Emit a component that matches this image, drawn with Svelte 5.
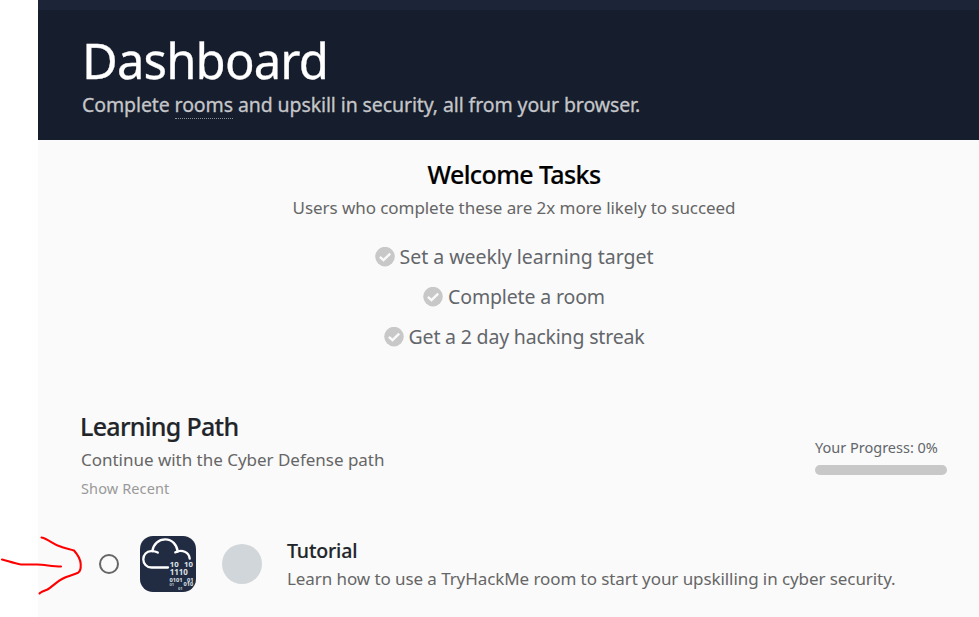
<script>
  const tasks = [
    { label: 'Set a weekly learning target', tracking: -0.03 },
    { label: 'Complete a room', tracking: -0.14 },
    { label: 'Get a 2 day hacking streak', tracking: -0.19 }
  ];
</script>

<div class="page">
  <header>
    <h1>Dashboard</h1>
    <p>Complete <span class="term">rooms</span> and upskill in security, all from your browser.</p>
  </header>

  <main>
    <section class="welcome">
      <h2>Welcome Tasks</h2>
      <p>Users who complete these are 2x more likely to succeed</p>
      <ul>
        {#each tasks as task}
          <li>
            <svg width="20" height="20" viewBox="0 0 20 20">
              <circle cx="10" cy="9.6" r="9.8" fill="#c8c8c8" />
              <path d="M4.9 9.8 8.5 13.2 15.200 6.600" fill="none" stroke="#fafafa" stroke-width="2.4" />
            </svg>
            <span style="letter-spacing: {task.tracking}px">{task.label}</span>
          </li>
        {/each}
      </ul>
    </section>

    <section class="path">
      <div>
        <h2>Learning Path</h2>
        <p>Continue with the Cyber Defense path</p>
        <a class="recent">Show Recent</a>
      </div>
      <div class="progress">
        <span>Your Progress: 0%</span>
        <div class="bar"></div>
      </div>
    </section>

    <article>
      <span class="ring"></span>
      <svg class="tile" width="56" height="56" viewBox="0 0 56 56">
        <rect width="56" height="56" rx="13" fill="#212c42" />
        <g fill="none" stroke="#fff" stroke-width="2.3" stroke-linecap="round">
          <path d="M28 31.5H11.5C6.5 31.5 3.3 27.5 3.3 23.2C3.3 18.5 6.700 15.300 11 15.100C13.700 15 16 15.500 17.800 16.600" />
          <path d="M12.3 15C13.5 8 18.5 3.4 25.3 3.4C32 3.4 36.9 8.6 37.7 15.6" />
          <path d="M35.3 16.4C42 13 49 16 49.7 22.6" />
        </g>
        <g class="bits" fill="#dfe2e8">
          <text x="29.7" y="30.5" font-size="7.8">10</text>
          <text x="44" y="30.5" font-size="7.8">10</text>
          <text x="29.7" y="39.3" font-size="7.9">1110</text>
          <text x="29.5" y="46" font-size="5.7">0101</text>
          <text x="47" y="46" font-size="5.7">01</text>
          <text x="29.5" y="50.2" font-size="4" opacity="0.8">01</text>
          <text x="43.5" y="50.2" font-size="5.6">010</text>
          <text x="38" y="54" font-size="4" opacity="0.8">01</text>
        </g>
      </svg>
      <span class="avatar"></span>
      <div class="room">
        <h3>Tutorial</h3>
        <p>Learn how to use a TryHackMe room to start your upskilling in cyber security.</p>
      </div>
    </article>
  </main>

  <svg class="arrow" width="90" height="70" viewBox="0 0 90 70">
    <path d="M2 29.5C8 31 14 33.500 21 34.500H37C45 34.800 53 36.500 61 36.500" />
    <path d="M41.500 7.500C48 9 53 14 59 16C65 18.500 70 19 74 20.500C78 25 80.500 30 80.700 34C81 39 80.500 41.500 78 42.800C72 45.500 67 46 62 49C56 52 52 57 47.500 59.500C44 61 40.500 61.500 39.500 63.500" />
  </svg>
</div>

<style>
  :global(body) {
    background: #fff;
    overflow: hidden;
  }
  .page {
    position: relative;
    height: 617px;
    padding-left: 38px;
    box-sizing: border-box;
    display: flex;
    flex-direction: column;
    font-family: "Noto Sans", "Open Sans", sans-serif;
  }
  h1, h2, h3, p, ul {
    margin: 0;
    padding: 0;
    white-space: nowrap;
  }
  header {
    height: 140px;
    box-sizing: border-box;
    border-top: 10px solid #1c2538;
    padding: 21px 0 0 44px;
    background: #161d2c;
  }
  h1 {
    font-size: 49px;
    line-height: 58px;
    font-weight: 400;
    letter-spacing: -0.85px;
    color: #fff;
    -webkit-text-stroke: 0.3px #fff;
  }
  header p {
    font-size: 19.5px;
    line-height: 32px;
    letter-spacing: -0.1px;
    color: #c5c6c9;
    -webkit-text-stroke: 0.3px #c5c6c9;
  }
  .term {
    display: inline-block;
    line-height: 26px;
    border-bottom: 1px dotted #8b8e95;
  }
  main {
    flex: 1;
    background: #fafafa;
  }
  .welcome {
    width: 952px;
    padding-top: 17px;
    text-align: center;
  }
  h2 {
    font-size: 25px;
    line-height: 34px;
    font-weight: 500;
    letter-spacing: -0.6px;
    color: #212529;
    -webkit-text-stroke: 0.2px;
  }
  .welcome h2 {
    color: #000;
  }
  .welcome p, .path p, .room p {
    font-size: 17px;
    line-height: 30px;
    color: #666;
  }
  .welcome p {
    margin-top: 2px;
    letter-spacing: -0.06px;
  }
  ul {
    list-style: none;
    margin-top: 14px;
  }
  li {
    display: flex;
    align-items: center;
    justify-content: center;
    gap: 5px;
    height: 40px;
    font-size: 19.5px;
    line-height: 40px;
    color: #63666a;
  }
  .path {
    display: flex;
    justify-content: space-between;
    margin-top: 52px;
    padding: 0 32px 0 43px;
  }
  .path h2 {
    margin-left: -1px;
    letter-spacing: -0.7px;
  }
  .path p {
    margin-top: 2px;
    letter-spacing: -0.02px;
  }
  .recent {
    display: block;
    font-size: 14.5px;
    line-height: 24px;
    letter-spacing: 0.12px;
    margin-top: 1px;
    color: #999;
  }
  .progress {
    width: 132px;
    padding-top: 26px;
    font-size: 14.5px;
    line-height: 24px;
    color: #63666a;
    white-space: nowrap;
  }
  .bar {
    height: 10px;
    margin-top: 6px;
    border-radius: 5px;
    background: #c8c8c8;
  }
  article {
    display: flex;
    align-items: center;
    height: 56px;
    margin-top: 36px;
    padding-left: 61px;
  }
  .ring {
    width: 20px;
    height: 20px;
    box-sizing: border-box;
    border: 2px solid #666;
    border-radius: 50%;
  }
  .tile {
    margin-left: 21px;
  }
  .bits {
    font-family: "Noto Sans", sans-serif;
    font-weight: 700;
  }
  .avatar {
    width: 40px;
    height: 40px;
    margin-left: 26px;
    border-radius: 50%;
    background: #d1d6da;
  }
  .room {
    margin-left: 25px;
    padding-top: 2px;
  }
  h3 {
    font-size: 19.5px;
    line-height: 28px;
    font-weight: 500;
    letter-spacing: -0.15px;
    color: #212529;
    -webkit-text-stroke: 0.15px;
  }
  .room p {
    line-height: 28px;
    letter-spacing: -0.08px;
  }
  .arrow {
    position: absolute;
    left: 0;
    top: 530px;
    fill: none;
    stroke: #f00;
    stroke-width: 2.1;
    stroke-linecap: round;
    stroke-linejoin: round;
  }
</style>
